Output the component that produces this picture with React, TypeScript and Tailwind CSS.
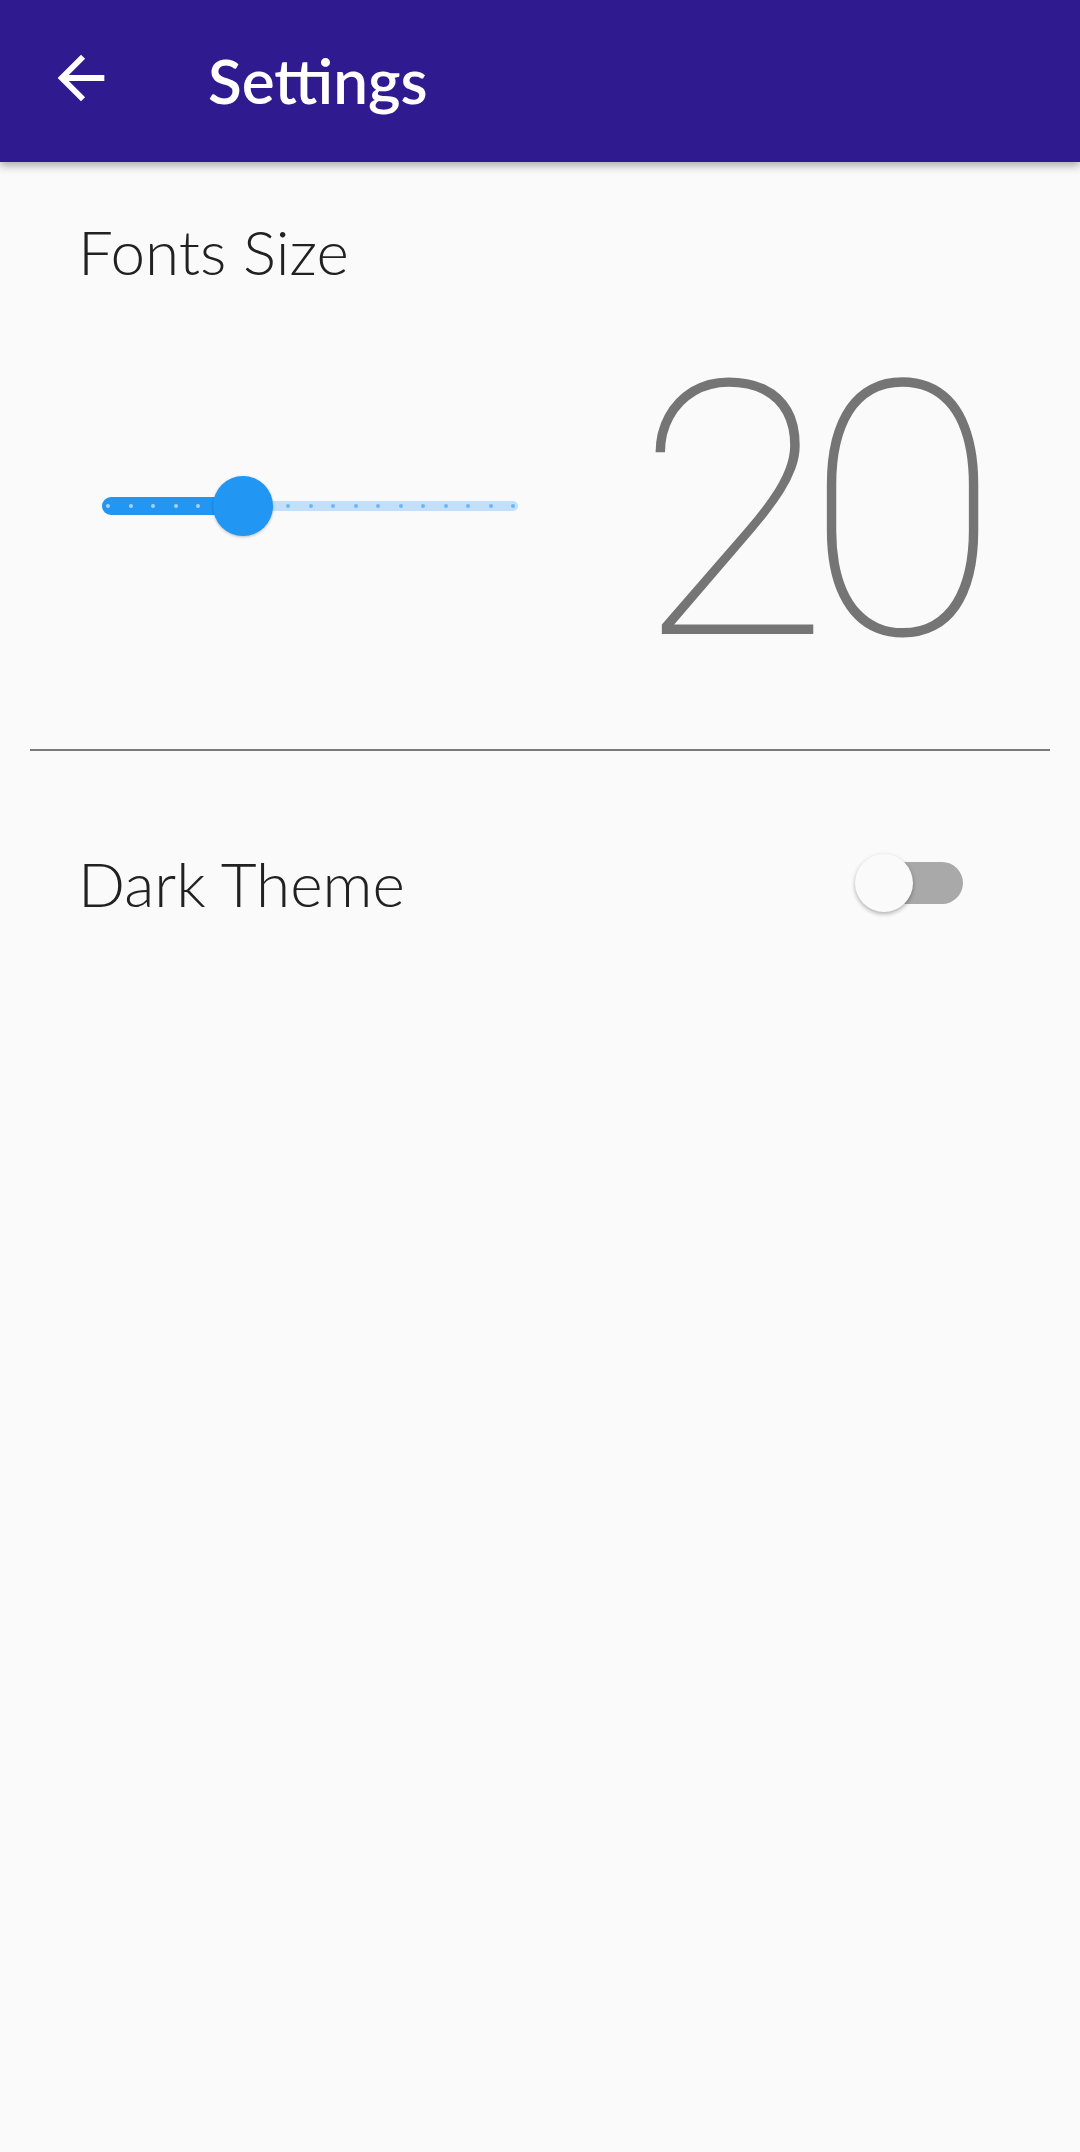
import React from "react";

const activeDots = Array.from({ length: 6 }, (_, i) => i);
const inactiveDots = Array.from({ length: 12 }, (_, i) => i);

function Slider() {
  return (
    <div className="flex items-center w-[422px] h-[60px] pl-[2px]">
      <div className="flex items-center gap-[18.5px] pl-[4px] w-[141px] h-[18px] rounded-l-full bg-[#2196f3]">
        {activeDots.map((i) => (
          <span key={i} className="shrink-0 w-[4px] h-[4px] rounded-full bg-[#a8d3f9]" />
        ))}
      </div>
      <div className="relative z-10 shrink-0 -mx-[30px] w-[60px] h-[60px] rounded-full bg-[#2196f3] shadow-[0_1px_3px_rgba(0,0,0,0.25)]" />
      <div className="flex items-center gap-[18.5px] pl-[20.5px] w-[275px] h-[10px] rounded-r-full bg-[#c3e0fa]">
        {inactiveDots.map((i) => (
          <span key={i} className="shrink-0 w-[4px] h-[4px] rounded-full bg-[#6fb6f2]" />
        ))}
      </div>
    </div>
  );
}

function Switch() {
  return (
    <div className="flex items-center h-[60px]">
      <div className="relative z-10 shrink-0 w-[58px] h-[58px] rounded-full bg-[#fafafa] shadow-[0_2px_4px_rgba(0,0,0,0.3)]" />
      <div className="-ml-[43px] w-[93px] h-[42px] rounded-full bg-[#a9a9a9]" />
    </div>
  );
}

export default function App() {
  return (
    <div className="w-[1080px] h-[2152px] bg-[#fafafa] overflow-hidden" style={{ fontFamily: "Lato, 'Noto Sans', sans-serif" }}>
      <header className="relative z-10 h-[162px] bg-[#2f1b8f] shadow-[0_4px_8px_rgba(0,0,0,0.3)] flex items-center">
        <svg className="ml-[46px] mt-[-6px]" width="70" height="70" viewBox="0 0 24 24" fill="#ffffff">
          <path d="M20 11H7.83l5.59-5.59L12 4l-8 8 8 8 1.41-1.41L7.83 13H20v-2z" />
        </svg>
        <div className="ml-[92px] text-[62px] leading-[62px] font-semibold text-white mt-[-2px]">Settings</div>
      </header>
      <div className="pl-[78px] mt-[58px] text-[62px] leading-[62px] font-light text-[#212121]">Fonts Size</div>
      <div className="flex justify-between">
        <div className="ml-[100px] mt-[194px]">
          <Slider />
        </div>
        <div
          className="mt-[53px] mr-[105px] text-[356px] leading-[356px] font-thin tracking-[-25px] text-[#757575]"
          style={{ fontFamily: "Roboto, sans-serif" }}
        >
          20
        </div>
      </div>
      <div className="mt-[58px] mx-[30px] h-[2px] bg-[#7a7a7a]" />
      <div className="mt-[101px] flex items-center justify-between">
        <div className="pl-[78px] text-[62px] leading-[62px] font-light text-[#212121]">Dark Theme</div>
        <div className="mr-[117px]">
          <Switch />
        </div>
      </div>
    </div>
  );
}
